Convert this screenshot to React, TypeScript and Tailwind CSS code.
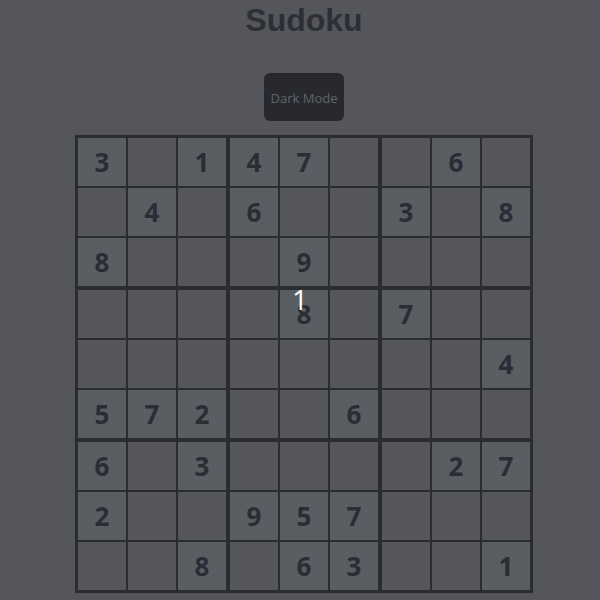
import React from "react";

const puzzle: number[][] = [
  [3, 0, 1, 4, 7, 0, 0, 6, 0],
  [0, 4, 0, 6, 0, 0, 3, 0, 8],
  [8, 0, 0, 0, 9, 0, 0, 0, 0],
  [0, 0, 0, 0, 8, 0, 7, 0, 0],
  [0, 0, 0, 0, 0, 0, 0, 0, 4],
  [5, 7, 2, 0, 0, 6, 0, 0, 0],
  [6, 0, 3, 0, 0, 0, 0, 2, 7],
  [2, 0, 0, 9, 5, 7, 0, 0, 0],
  [0, 0, 8, 0, 6, 3, 0, 0, 1],
];

const Cell = ({ value, row, col }: { value: number; row: number; col: number }) => {
  const given = value !== 0;
  // the stray "1" being typed over the 8
  const typing = row === 3 && col === 4;
  return (
    <div
      className={`relative w-[50px] h-[50px] border border-[#2a2c31] flex items-center justify-center ${
        given ? "bg-[#5a5d62]" : "bg-[#55565b]"
      }`}
    >
      {given && (
        <span className="text-[26px] font-bold leading-none text-[#2a2d34]">{value}</span>
      )}
      {typing && (
        <span className="absolute left-[12px] top-[-5px] text-[28px] leading-none text-white">
          1
        </span>
      )}
    </div>
  );
};

const Box = ({ br, bc }: { br: number; bc: number }) => (
  <div className="grid grid-cols-3 border border-[#2a2c31]">
    {[0, 1, 2].map((r) =>
      [0, 1, 2].map((c) => {
        const row = br * 3 + r;
        const col = bc * 3 + c;
        return <Cell key={`${row}-${col}`} value={puzzle[row][col]} row={row} col={col} />;
      })
    )}
  </div>
);

export default function App() {
  return (
    <div
      className="min-h-[600px] bg-[#55565b] flex flex-col items-center pl-[8px]"
      style={{ fontFamily: '"Open Sans", "Noto Sans", sans-serif' }}
    >
      <h1
        className="text-[32px] leading-[40px] font-bold text-[#2c2f35]"
        style={{ fontFamily: '"Liberation Sans", Arial, sans-serif' }}
      >
        Sudoku
      </h1>

      <button className="mt-[33px] h-[48px] px-[7px] pt-[4px] rounded-md bg-[#27292e] text-[13px] text-[#62656b]">
        Dark Mode
      </button>

      <div className="mt-[14px] grid grid-cols-3 border border-[#2a2c31]">
        {[0, 1, 2].map((br) =>
          [0, 1, 2].map((bc) => <Box key={`${br}-${bc}`} br={br} bc={bc} />)
        )}
      </div>
    </div>
  );
}
